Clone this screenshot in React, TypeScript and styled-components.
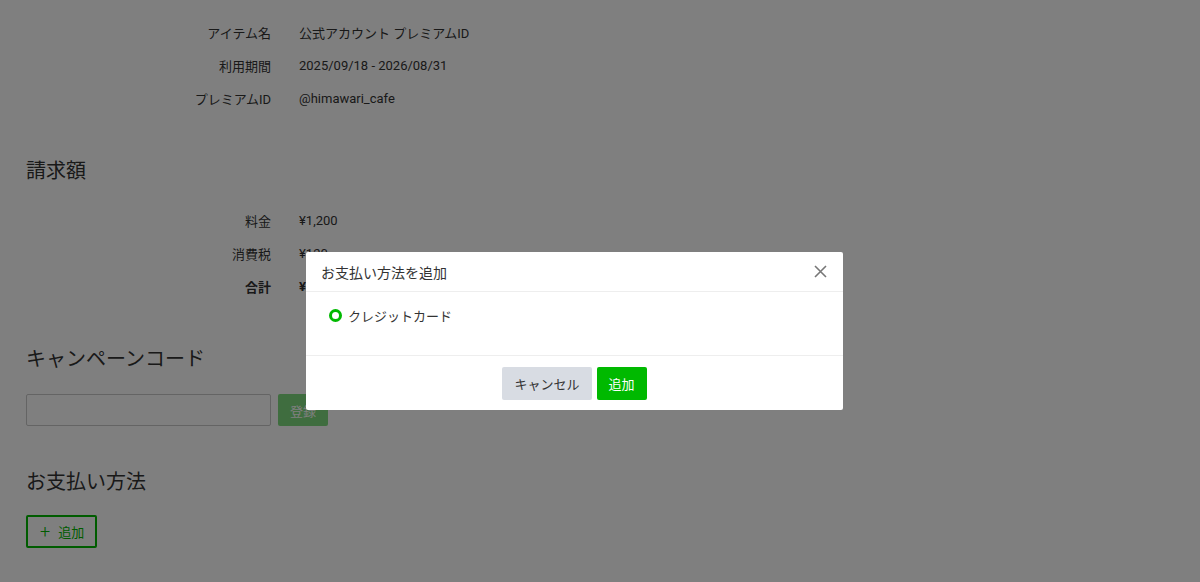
import React from 'react';
import styled, {createGlobalStyle} from "styled-components";

const green = "#00b900";

const GlobalStyle = createGlobalStyle`
    * {
        box-sizing: border-box;
    }
    body {
        margin: 0;
        background: #fff;
        color: #333;
        font-family: Roboto, "Noto Sans CJK JP", sans-serif;
        font-size: 13px;
    }
`

type Row = { label: string; value: string; strong?: boolean };

const itemRows: Row[] = [
    {label: "アイテム名", value: "公式アカウント プレミアムID"},
    {label: "利用期間", value: "2025/09/18 - 2026/08/31"},
    {label: "プレミアムID", value: "@himawari_cafe"},
];

const billRows: Row[] = [
    {label: "料金", value: "¥1,200"},
    {label: "消費税", value: "¥120"},
    {label: "合計", value: "¥1,320", strong: true},
];

const DetailTable = ({rows}: { rows: Row[] }) => (
    <Table>
        {rows.map(r => (
            <React.Fragment key={r.label}>
                <Label $strong={r.strong}>{r.label}</Label>
                <Value $strong={r.strong}>{r.value}</Value>
            </React.Fragment>
        ))}
    </Table>
);

export default function App() {
    return (
        <>
            <GlobalStyle/>
            <Page>
                <DetailTable rows={itemRows}/>

                <Section>
                    <Heading>請求額</Heading>
                    <DetailTable rows={billRows}/>
                </Section>

                <Section>
                    <Heading>キャンペーンコード</Heading>
                    <CodeForm>
                        <CodeInput type="text"/>
                        <SubmitButton disabled>登録</SubmitButton>
                    </CodeForm>
                </Section>

                <Section>
                    <Heading>お支払い方法</Heading>
                    <OutlineButton>
                        <Plus>+</Plus>
                        追加
                    </OutlineButton>
                </Section>
            </Page>

            <Overlay>
                <Modal>
                    <ModalHeader>
                        <ModalTitle>お支払い方法を追加</ModalTitle>
                        <CloseButton aria-label="close">
                            <svg width="13" height="13" viewBox="0 0 13 13">
                                <path d="M1 1L12 12M12 1L1 12" stroke="#777" strokeWidth="1.6" fill="none"/>
                            </svg>
                        </CloseButton>
                    </ModalHeader>
                    <ModalBody>
                        <RadioOption>
                            <RadioDot/>
                            クレジットカード
                        </RadioOption>
                    </ModalBody>
                    <ModalFooter>
                        <FooterButton $variant="secondary">キャンセル</FooterButton>
                        <FooterButton $variant="primary">追加</FooterButton>
                    </ModalFooter>
                </Modal>
            </Overlay>
        </>
    );
}

const Page = styled.main`
    padding: 16px 26px 40px;
`

const Table = styled.div`
    display: grid;
    grid-template-columns: 245px 1fr;
    column-gap: 28px;
    grid-auto-rows: 33px;
    align-items: center;
`

const Label = styled.div<{ $strong?: boolean }>`
    text-align: right;
    font-weight: ${p => p.$strong ? 700 : 400};
`

const Value = styled.div<{ $strong?: boolean }>`
    font-weight: ${p => p.$strong ? 700 : 400};
`

const Section = styled.section`
    margin-top: 42px;
`

const Heading = styled.h2`
    margin: 0 0 19px;
    font-size: 20px;
    font-weight: 400;
    line-height: 28px;
`

const CodeForm = styled.div`
    display: flex;
    gap: 7px;
    padding-top: 2px;
`

const CodeInput = styled.input`
    width: 245px;
    height: 32px;
    border: 1px solid #c8c8c8;
    border-radius: 2px;
    padding: 0 8px;
    font-size: 13px;
`

const SubmitButton = styled.button`
    width: 50px;
    height: 32px;
    border: none;
    border-radius: 2px;
    background: ${green};
    color: #fff;
    font-family: inherit;
    font-size: 13px;
    opacity: .5;
`

const OutlineButton = styled.button`
    display: inline-flex;
    align-items: center;
    gap: 8px;
    height: 33px;
    padding: 0 11px 0 12px;
    border: 2px solid ${green};
    border-radius: 2px;
    background: #fff;
    color: ${green};
    font-family: inherit;
    font-size: 13px;
`

const Plus = styled.span`
    font-size: 18px;
    line-height: 1;
    font-weight: 300;
`

const Overlay = styled.div`
    position: fixed;
    inset: 0;
    background: rgba(0, 0, 0, .5);
    display: flex;
    justify-content: center;
    align-items: flex-start;
    padding: 252px 51px 0 0;
`

const Modal = styled.div`
    width: 537px;
    background: #fff;
    border-radius: 2px;
    color: #333;
`

const ModalHeader = styled.header`
    display: flex;
    align-items: center;
    justify-content: space-between;
    height: 40px;
    padding: 0 16px 0 15px;
    border-bottom: 1px solid #eee;
`

const ModalTitle = styled.h3`
    margin: 0;
    font-size: 14px;
    font-weight: 400;
`

const CloseButton = styled.button`
    display: flex;
    padding: 0;
    border: none;
    background: none;
`

const ModalBody = styled.div`
    height: 64px;
    padding: 14px 23px;
    border-bottom: 1px solid #eee;
`

const RadioOption = styled.label`
    display: flex;
    align-items: center;
    gap: 6px;
    font-size: 13px;
`

const RadioDot = styled.span`
    width: 13px;
    height: 13px;
    border-radius: 50%;
    border: 3.5px solid ${green};
    background: #fff;
`

const ModalFooter = styled.footer`
    display: flex;
    justify-content: center;
    gap: 5px;
    padding: 11px 0 10px;
`

const FooterButton = styled.button<{ $variant: "primary" | "secondary" }>`
    height: 33px;
    padding: 0 12px;
    border: none;
    border-radius: 2px;
    background: ${p => p.$variant === "primary" ? green : "#d8dce3"};
    color: ${p => p.$variant === "primary" ? "#fff" : "#333"};
    font-family: inherit;
    font-size: 13px;
`
